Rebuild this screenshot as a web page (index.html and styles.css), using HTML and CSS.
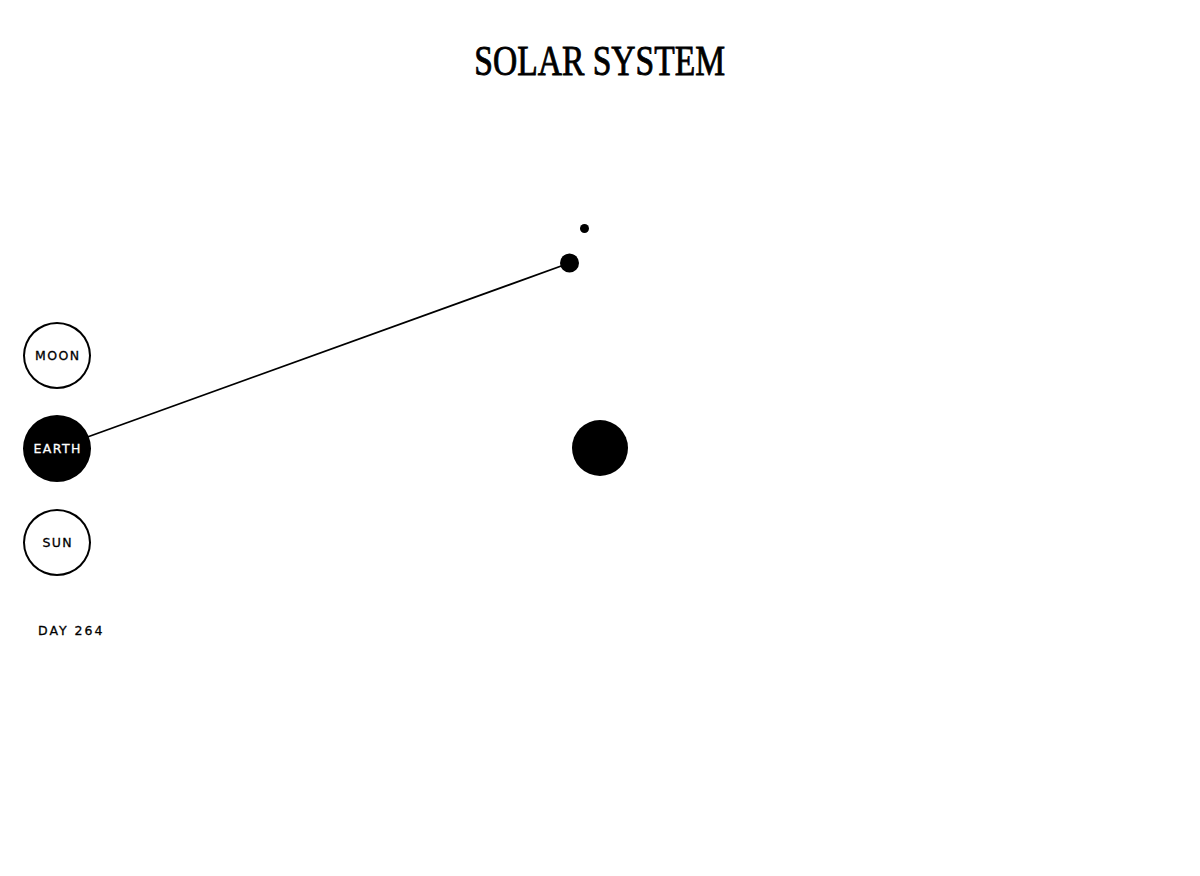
FILE: index.html
```html
<!DOCTYPE html>
<html>
<head>
<meta charset="utf-8">
<link rel="stylesheet" href="styles.css">
</head>
<body>
<div class="page">
  <svg class="orbit" width="1200" height="876" viewBox="0 0 1200 876">
    <line x1="57" y1="448" x2="569.5" y2="263" stroke="#000" stroke-width="1.8"/>
    <circle cx="600" cy="448" r="28" fill="#000"/>
    <circle cx="569.5" cy="263" r="9.5" fill="#000"/>
    <circle cx="584.5" cy="228.5" r="4.5" fill="#000"/>
  </svg>
  <header class="header">
    <h1 class="title">SOLAR SYSTEM</h1>
  </header>
  <nav class="controls">
    <button class="body-btn">MOON</button>
    <button class="body-btn active">EARTH</button>
    <button class="body-btn">SUN</button>
    <div class="day">DAY 264</div>
  </nav>
</div>
</body>
</html>
```
FILE: styles.css
```css
html, body {
  margin: 0;
  padding: 0;
  background: #fff;
}
.page {
  position: relative;
  width: 1200px;
  height: 876px;
  overflow: hidden;
  font-family: "DejaVu Sans", sans-serif;
}
.orbit {
  position: absolute;
  left: 0;
  top: 0;
  z-index: 0;
}
.header {
  position: relative;
  z-index: 1;
  display: flex;
  justify-content: center;
  padding-top: 36px;
}
.title {
  margin: 0;
  font-family: "Liberation Serif", "Times New Roman", serif;
  font-weight: normal;
  font-size: 43px;
  line-height: 50px;
  color: #000;
  -webkit-text-stroke: 0.9px #000;
  transform: scaleX(0.78);
}
.controls {
  position: relative;
  z-index: 1;
  display: flex;
  flex-direction: column;
  align-items: flex-start;
  gap: 26.5px;
  padding-left: 23px;
  margin-top: 235.5px;
}
.body-btn {
  box-sizing: border-box;
  width: 68px;
  height: 67px;
  border-radius: 50%;
  border: 2px solid #000;
  background: #fff;
  color: #000;
  padding: 0;
  font-family: "DejaVu Sans", sans-serif;
  font-size: 12.5px;
  letter-spacing: 1.4px;
  text-indent: 1.4px;
  -webkit-text-stroke: 0.3px currentColor;
  display: flex;
  align-items: center;
  justify-content: center;
}
.body-btn.active {
  background: #000;
  color: #fff;
}
.day {
  margin-left: 15px;
  margin-top: 21px;
  font-size: 12.5px;
  letter-spacing: 2px;
  -webkit-text-stroke: 0.3px #000;
  color: #000;
}
```
